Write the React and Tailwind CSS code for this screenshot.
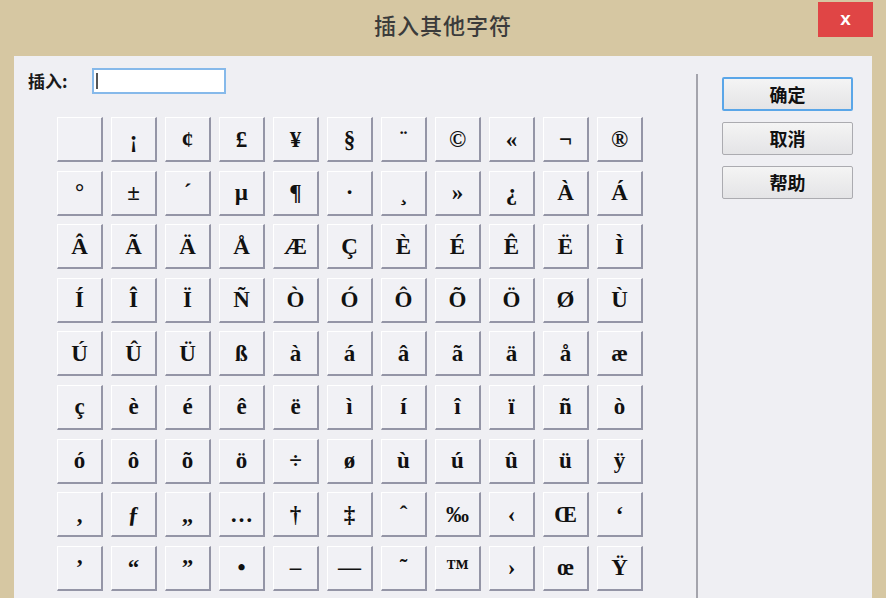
import React from 'react';

// characters shown in the insert-symbol grid, one array per row
const rows = [
    [' ', '¡', '¢', '£', '¥', '§', '¨', '©', '«', '¬', '®'],
    ['°', '±', '´', 'µ', '¶', '·', '¸', '»', '¿', 'À', 'Á'],
    ['Â', 'Ã', 'Ä', 'Å', 'Æ', 'Ç', 'È', 'É', 'Ê', 'Ë', 'Ì'],
    ['Í', 'Î', 'Ï', 'Ñ', 'Ò', 'Ó', 'Ô', 'Õ', 'Ö', 'Ø', 'Ù'],
    ['Ú', 'Û', 'Ü', 'ß', 'à', 'á', 'â', 'ã', 'ä', 'å', 'æ'],
    ['ç', 'è', 'é', 'ê', 'ë', 'ì', 'í', 'î', 'ï', 'ñ', 'ò'],
    ['ó', 'ô', 'õ', 'ö', '÷', 'ø', 'ù', 'ú', 'û', 'ü', 'ÿ'],
    ['‚', 'ƒ', '„', '…', '†', '‡', 'ˆ', '‰', '‹', 'Œ', '‘'],
    ['’', '“', '”', '•', '–', '—', '˜', '™', '›', 'œ', 'Ÿ'],
];

const cjk = { fontFamily: '"Noto Sans CJK SC", "Noto Sans", sans-serif' };

function CharCell({ ch }) {
    return (
        <button
            className="w-[46px] h-[45px] flex items-center justify-center bg-[#f1f1f5] border-t border-l border-t-white border-l-white border-r-2 border-b-2 border-r-[#9495a6] border-b-[#9495a6] text-[23px] font-bold text-[#111] leading-none"
            style={{ fontFamily: '"Liberation Serif", "DejaVu Serif", serif' }}
        >
            {ch}
        </button>
    );
}

function DialogButton({ label, primary }) {
    return (
        <button
            className={
                primary
                    ? 'w-[131px] h-[34px] rounded-[2px] border-2 border-[#5aa6e8] bg-gradient-to-b from-[#f4f4f4] to-[#e4e4e6] text-[18px] font-bold text-[#111] flex items-center justify-center'
                    : 'w-[131px] h-[33px] rounded-[2px] border border-[#ababb0] bg-gradient-to-b from-[#f4f4f4] to-[#e4e4e6] text-[18px] font-bold text-[#111] flex items-center justify-center'
            }
            style={cjk}
        >
            {label}
        </button>
    );
}

export default function App() {
    return (
        <div className="w-[886px] h-[598px] bg-[#d6c7a2] flex flex-col overflow-hidden">
            {/* title bar */}
            <div className="relative h-[56px] flex items-center justify-center shrink-0">
                <span className="text-[22px] font-medium text-[#3b3b3b] tracking-[1px] -mt-[8px]" style={cjk}>
                    插入其他字符
                </span>
                <div className="absolute right-[13px] top-[2px] w-[55px] h-[35px] bg-[#e04545] flex items-center justify-center">
                    <span className="text-white text-[19px] font-bold leading-none -mt-[2px]" style={{ fontFamily: '"Liberation Sans", sans-serif' }}>x</span>
                </div>
            </div>

            {/* dialog body */}
            <div className="flex-1 mx-[14px] bg-[#efeff3] flex flex-row overflow-hidden">
                <div className="w-[682px] pl-[14px] pt-[12px] flex flex-col">
                    <div className="flex items-center h-[26px]">
                        <span className="text-[17px] font-bold text-[#1a1a1a] w-[64px]" style={cjk}>插入:</span>
                        <div className="w-[134px] h-[26px] border-2 border-[#86b9ea] bg-white flex items-center pl-[2px]">
                            <div className="w-[2px] h-[16px] bg-[#555]"></div>
                        </div>
                    </div>
                    <div className="mt-[23px] ml-[29px] flex flex-col gap-y-[8.6px]">
                        {rows.map((row, r) => (
                            <div key={r} className="flex flex-row gap-x-[8px]">
                                {row.map((ch, c) => (
                                    <CharCell key={c} ch={ch} />
                                ))}
                            </div>
                        ))}
                    </div>
                </div>

                {/* separator */}
                <div className="w-[2px] mt-[18px] bg-[#a4a4ac]"></div>

                <div className="pl-[24px] pt-[21px] flex flex-col gap-[11px]">
                    <DialogButton label="确定" primary />
                    <DialogButton label="取消" />
                    <DialogButton label="帮助" />
                </div>
            </div>
        </div>
    );
}
